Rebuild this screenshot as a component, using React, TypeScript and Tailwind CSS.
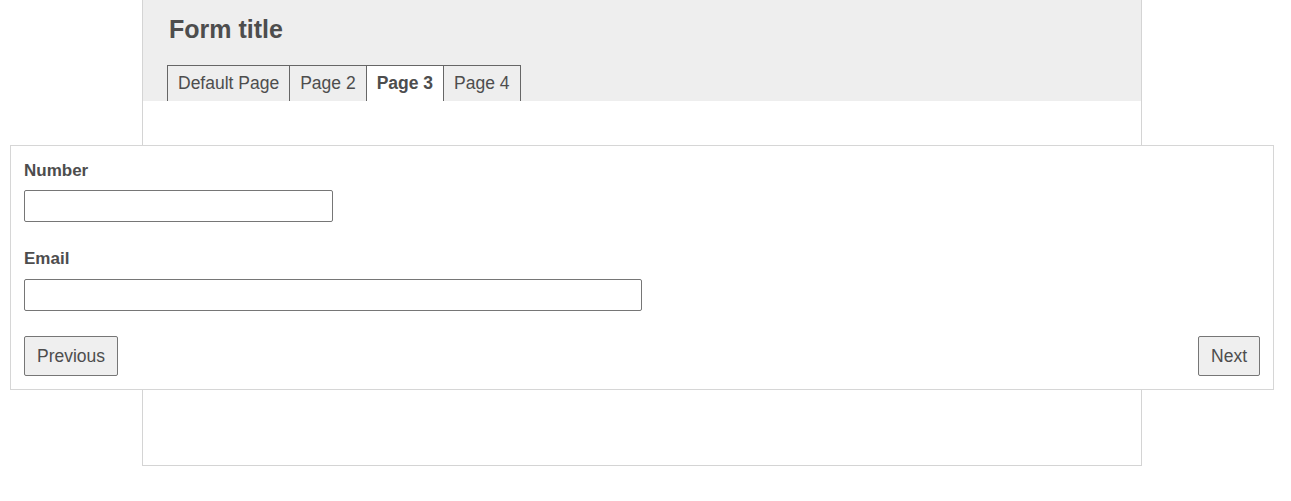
export default function App() {
  const tabs = ["Default Page", "Page 2", "Page 3", "Page 4"];
  return (
    <div className="w-[1291px] h-[501px] bg-white text-[#4d4d4d]" style={{ fontFamily: '"Liberation Sans", Arial, sans-serif' }}>
      <div className="ml-[142px] w-[1000px] h-[466px] border-x border-b border-[#d4d4d4] flex flex-col">
        <div className="bg-[#eeeeee] pl-[24px] pt-[13px]">
          <h1 className="ml-[2px] text-[25px] leading-[32px] font-bold text-[#4d4d4d]">Form title</h1>
          <div className="flex mt-[20px]">
            {tabs.map((t, i) => (
              <div
                key={t}
                className={
                  "h-[36px] flex items-center px-[10px] text-[17.5px] border-t border-r border-[#666666] " +
                  (i === 0 ? "border-l " : "") +
                  (i === 2 ? "bg-white font-bold" : "")
                }
              >
                {t}
              </div>
            ))}
          </div>
        </div>
        <div className="pt-[44px]">
          <div className="-mx-[133px] bg-white border border-[#d6d6d6] px-[13px] pt-[15px] pb-[13px]">
            <label className="block text-[17px] leading-[19px] font-bold">Number</label>
            <input className="block mt-[10px] w-[309px] h-[32px] border border-[#767676] rounded-[2px]" />
            <label className="block mt-[27px] text-[17px] leading-[19px] font-bold">Email</label>
            <input className="block mt-[11px] w-[618px] h-[32px] border border-[#767676] rounded-[2px]" />
            <div className="flex justify-between mt-[25px]">
              <button className="h-[40px] px-[12px] text-[17.5px] bg-[#efefef] border border-[#767676] rounded-[2px]">Previous</button>
              <button className="h-[40px] px-[12px] text-[17.5px] bg-[#efefef] border border-[#767676] rounded-[2px]">Next</button>
            </div>
          </div>
        </div>
      </div>
    </div>
  );
}
